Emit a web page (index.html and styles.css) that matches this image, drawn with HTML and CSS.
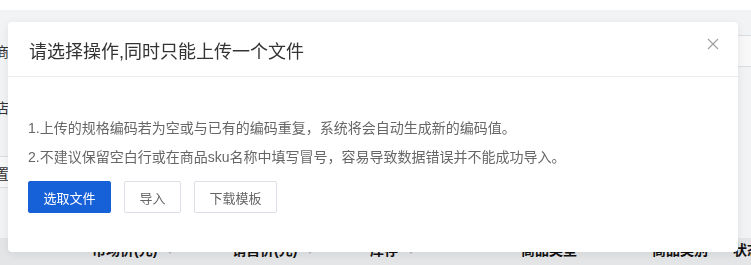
FILE: index.html
```html
<!DOCTYPE html>
<html lang="zh-cn">
<head>
  <meta charset="UTF-8">
  <meta name="viewport" content="width=device-width, initial-scale=1.0">
  <title>商品导入</title>
  <link rel="stylesheet" href="styles.css">
</head>
<body>
  <div class="page">
    <div class="topbar"></div>
    <div class="main">
      <div class="labels">
        <div class="label l1">商品编码</div>
        <div class="label l2">店铺名称</div>
        <div class="label l3 band">置顶</div>
      </div>
      <div class="panel">
        <div class="gap"></div>
        <div class="band b1"></div>
      </div>
    </div>
    <div class="thead">
      <div class="th c1">市场价(元)<i class="sort"></i></div>
      <div class="th c2">销售价(元)<i class="sort"></i></div>
      <div class="th c3">库存<i class="sort"></i></div>
      <div class="th c4">商品类型</div>
      <div class="th c5">商品类别</div>
      <div class="th c6">状态</div>
    </div>
  </div>

  <div class="dialog">
    <div class="dialog-head">
      <h2>请选择操作,同时只能上传一个文件</h2>
      <a href="#" class="close">
        <svg width="12" height="12" viewBox="0 0 12 12">
          <path d="M1 1 L11 11 M11 1 L1 11" stroke="#a0a0a0" stroke-width="1.2" fill="none"/>
        </svg>
      </a>
    </div>
    <div class="dialog-body">
      <p>1.上传的规格编码若为空或与已有的编码重复，系统将会自动生成新的编码值。</p>
      <p>2.不建议保留空白行或在商品sku名称中填写冒号，容易导致数据错误并不能成功导入。</p>
      <div class="btns">
        <button class="btn primary">选取文件</button>
        <button class="btn">导入</button>
        <button class="btn">下载模板</button>
      </div>
    </div>
  </div>
</body>
</html>
```

FILE: styles.css
```css
*{
  margin: 0;
  padding: 0;
  box-sizing: border-box;
  font-family: "Liberation Sans", "Noto Sans CJK SC", sans-serif;
}
body{
  background: #e5e6e8;
  overflow: hidden;
}
.page{
  width: 751px;
  height: 265px;
}
.topbar{
  height: 10px;
  background: #fff;
}
.main{
  display: flex;
  height: 228px;
  background: #f2f3f5;
}
.labels{
  width: 60px;
  flex-shrink: 0;
}
.label{
  white-space: nowrap;
  font-size: 14px;
  color: #333;
  padding-left: 0;
  text-indent: -5px;
}
.l1{
  margin-top: 31px;
  height: 22px;
  line-height: 22px;
}
.l2{
  margin-top: 34px;
  height: 22px;
  line-height: 22px;
}
.l3{
  margin-top: 37px;
  height: 32px;
  line-height: 30px;
  padding-top: 2px;
}
.band{
  background: #f8f8f9;
  border-top: 1px solid #dcdde0;
  border-bottom: 1px solid #dcdde0;
}
.panel{
  flex: 1;
}
.gap{
  height: 25px;
}
.b1{
  height: 32px;
}
.thead{
  display: flex;
  height: 27px;
  padding-left: 92px;
  background: #e4e5e7;
  white-space: nowrap;
}
.th{
  flex-shrink: 0;
  font-size: 14px;
  font-weight: bold;
  color: #111;
  line-height: 24px;
}
.c1{ width: 140px; }
.c2{ width: 138px; }
.c3{ width: 151px; }
.c4{ width: 131px; }
.c5{ width: 81px; }
.sort{
  display: inline-block;
  margin-left: 8px;
  vertical-align: middle;
  border-left: 5px solid transparent;
  border-right: 5px solid transparent;
  border-top: 6px solid #b8b9bc;
}

.dialog{
  position: fixed;
  left: 8px;
  top: 22px;
  width: 730px;
  height: 230px;
  background: #fff;
  border-radius: 4px;
  box-shadow: 0 2px 10px rgba(0,0,0,.08);
}
.dialog-head{
  height: 55px;
  padding: 17px 20px 0 21px;
  border-bottom: 1px solid #ebebeb;
}
.dialog-head h2{
  font-size: 18px;
  font-weight: normal;
  color: #333;
  line-height: 26px;
}
.close{
  position: absolute;
  right: 19px;
  top: 16px;
  width: 12px;
  height: 12px;
  display: block;
}
.close svg{
  display: block;
}
.dialog-body{
  padding: 37px 20px 0 20px;
}
.dialog-body p{
  font-size: 14px;
  color: #666;
  line-height: 29px;
}
.btns{
  display: flex;
  gap: 13px;
  margin-top: 9px;
}
.btn{
  height: 32px;
  padding: 0 14.5px;
  font-size: 13px;
  color: #666;
  background: #fff;
  border: 1px solid #dcdfe6;
  border-radius: 2px;
}
.btn.primary{
  color: #fff;
  background: #1660d8;
  border-color: #1660d8;
}
```
